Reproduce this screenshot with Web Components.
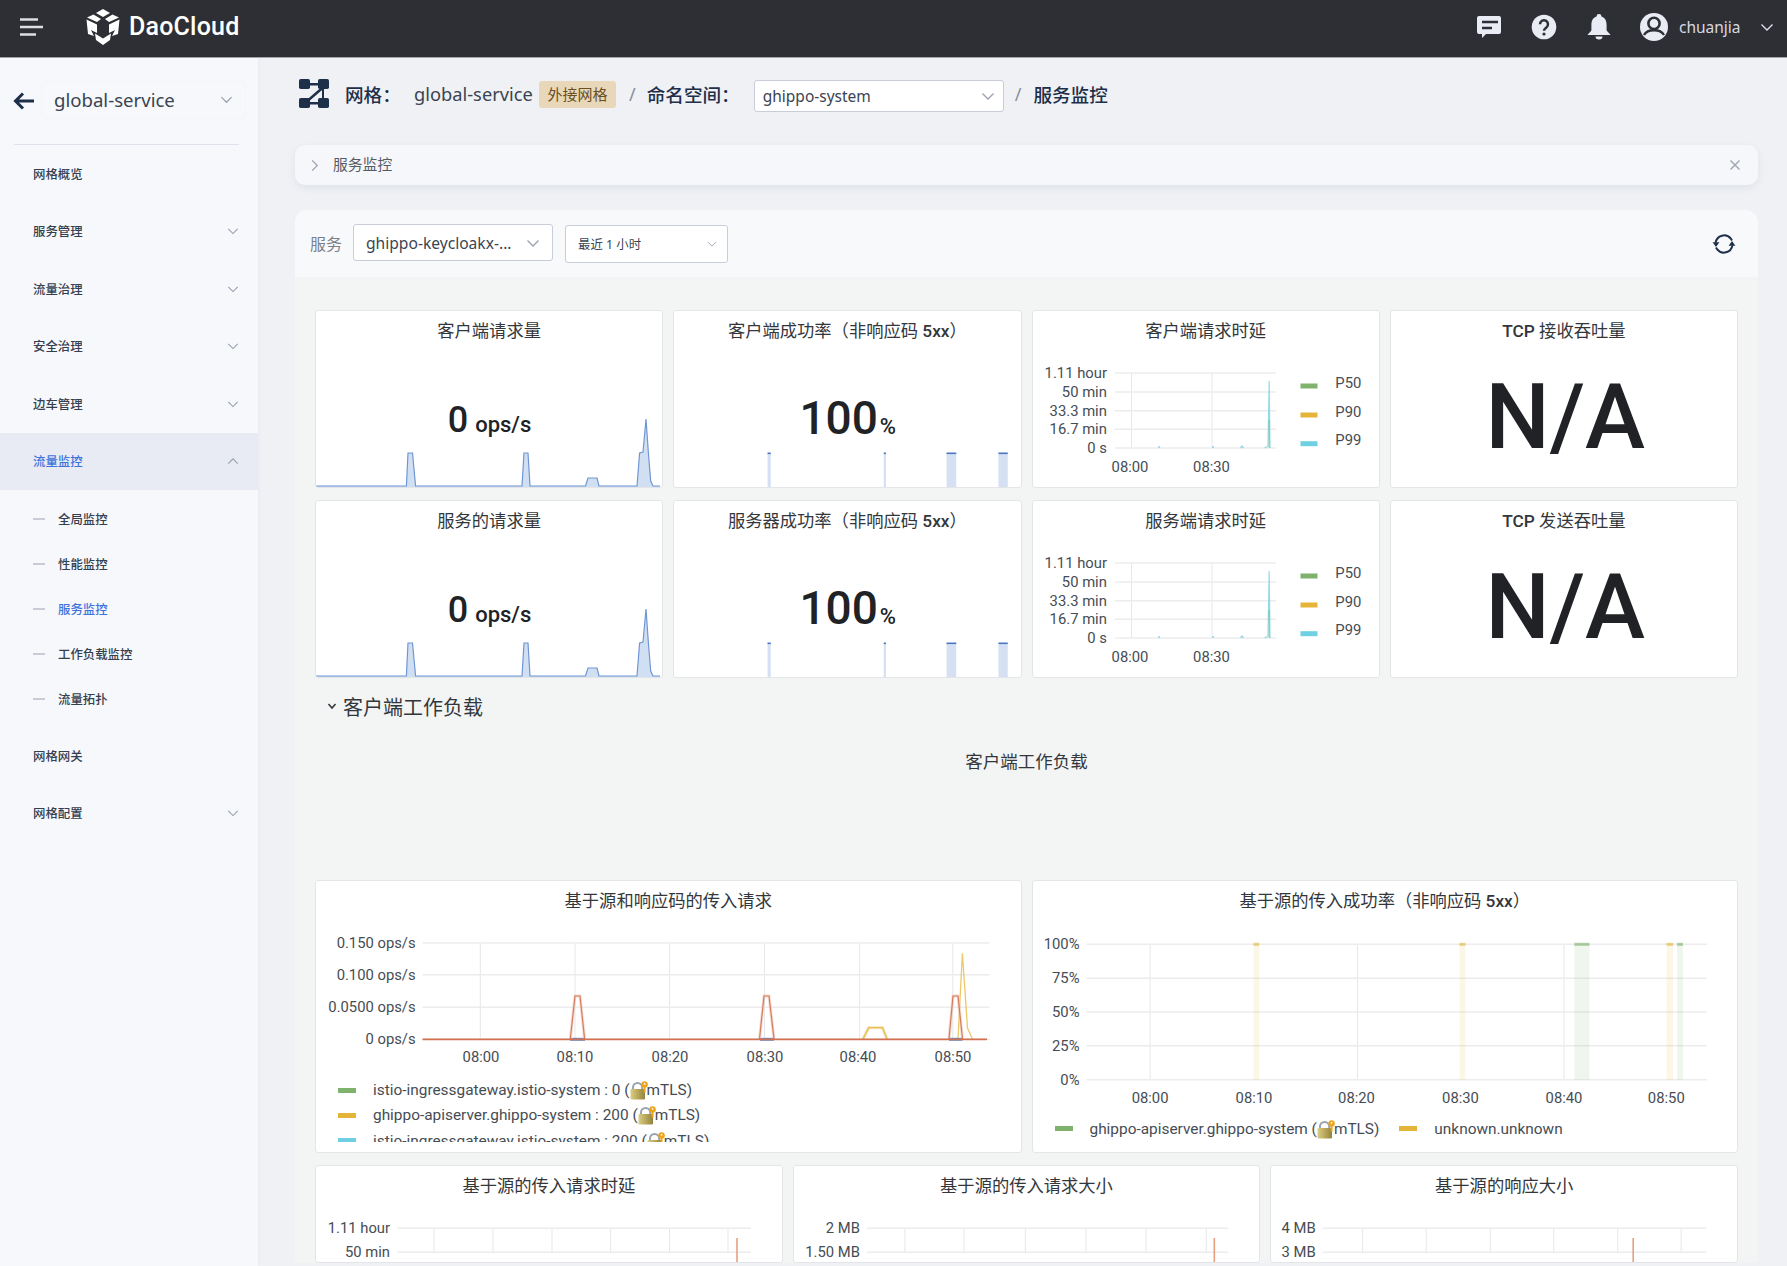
<!DOCTYPE html>
<html lang="zh">
<head>
<meta charset="utf-8">
<title>服务监控</title>
<style>
  html, body { margin: 0; height: 100%; overflow: hidden; background: #eff1f5; }
  body { font-family: "Noto Sans", "Noto Sans CJK SC", sans-serif; }
</style>
</head>
<body>
<dao-app>
  <top-bar slot="top"></top-bar>
  <side-nav slot="side"></side-nav>
  <mesh-crumbs></mesh-crumbs>
  <tab-strip label="服务监控"></tab-strip>
  <filter-bar></filter-bar>
  <mesh-dashboard></mesh-dashboard>
</dao-app>

<script>
const chevron = (size = 14, color = "#9aa0ae", up = false) => `<svg width="${size}" height="${size}" viewBox="0 0 14 14" fill="none" style="display:block">
<path d="${up ? "M1.5 10L7 4.5L12.5 10" : "M1.5 4.5L7 10L12.5 4.5"}" stroke="${color}" stroke-width="1.3"/></svg>`;

const GREEN = "#7eb26d", YELLOW = "#e5b53a", CYAN = "#6ed0e0", RED = "#d2714f";

const lockIcon = `<svg class="lock" width="18" height="19" viewBox="0 0 18 19">
<defs><linearGradient id="lk" x1="0" x2="1"><stop offset="0" stop-color="#dccd82"/><stop offset="1" stop-color="#94833a"/></linearGradient></defs>
<path d="M3 9V6.5a4.6 4.6 0 0 1 9.2 0V9" fill="none" stroke="#9aa4ad" stroke-width="2"/>
<rect x=".5" y="8" width="14.5" height="10.5" rx="1.2" fill="url(#lk)"/>
<circle cx="14.6" cy="3.4" r="3.2" fill="#eda51f"/><circle cx="14.6" cy="2.8" r=".9" fill="#fff"/>
<path d="M13.6 6h2v5.5h-2z" fill="#eda51f"/></svg>`;

// draws gridlines and labels in page coordinates, the viewBox does the shifting
function gridChart({ box, x1, x2, labelX, rows, cols, xLabels, xLabelY, body = "", font = 14.8 }) {
  const [bx, by, bw, bh] = box;
  const top = rows[0][0], bottom = rows[rows.length - 1][0];
  let s = `<svg xmlns="http://www.w3.org/2000/svg" width="${bw}" height="${bh}" viewBox="${bx} ${by} ${bw} ${bh}" font-family="Roboto, 'Noto Sans CJK SC', sans-serif" font-size="${font}" fill="#464c54" style="display:block;grid-area:1/1">`;
  for (const c of cols) s += `<line x1="${c}" x2="${c}" y1="${top}" y2="${bottom}" stroke="#e6e7e9"/>`;
  for (const [y] of rows) s += `<line x1="${x1}" x2="${x2}" y1="${y}" y2="${y}" stroke="#ececee" stroke-width="1.6"/>`;
  for (const [y, t] of rows) s += `<text x="${labelX}" y="${y + 5}" text-anchor="end">${t}</text>`;
  for (const [x, t] of xLabels || []) s += `<text x="${x}" y="${xLabelY}" text-anchor="middle">${t}</text>`;
  return s + body + `</svg>`;
}

function bareSvg(box, body) {
  const [bx, by, bw, bh] = box;
  return `<svg xmlns="http://www.w3.org/2000/svg" width="${bw}" height="${bh}" viewBox="${bx} ${by} ${bw} ${bh}" font-family="Roboto, sans-serif" fill="#202226" style="display:block;grid-area:1/1">${body}</svg>`;
}

const poly = (pts, color, width = 1.4, op = 1) => `<polyline points="${pts}" fill="none" stroke="${color}" stroke-width="${width}" opacity="${op}"/>`;
const band = (a, b, top, bottom, color, op = .12) => `<rect x="${a}" y="${top}" width="${b - a}" height="${bottom - top}" fill="${color}" opacity="${op}"/><rect x="${a}" y="${top - 1.5}" width="${b - a}" height="3" fill="${color}" opacity=".6"/>`;

const REQ_BOX = [316, 311, 346.25, 176];
const requestSpark = () => {
  const pts = "316,486 406.4,486 408,453 412.5,453 415.6,486 522,486 524,453 528,453 530,486 585.5,486 588,478 597,478 599,486 637,486 639.6,453 643,452 646,419 648.4,453 650.7,481 653,486 660,486";
  return `<polygon points="${pts} 660,488 316,488" fill="#c9d9f0" opacity=".85"/>` + poly(pts, "#6f96d4", 1.2);
};
const reqStat = bareSvg(REQ_BOX, requestSpark() + `<text x="489.5" y="431.7" text-anchor="middle" font-size="36" font-weight="500">0<tspan dx="7" font-size="22">ops/s</tspan></text>`);

const RATE_BOX = [674.25, 311, 346.25, 176];
const rateBars = [[767.8, 771], [884, 886.2], [946.8, 956.5], [998.7, 1008]].map(([a, b]) =>
  `<rect x="${a}" y="453" width="${b - a}" height="35" fill="#d5e1f3"/><rect x="${a}" y="452.5" width="${b - a}" height="1.6" fill="#4a76c4"/>`).join("");
const rateStat = bareSvg(RATE_BOX, rateBars + `<text x="848" y="434" text-anchor="middle" font-size="46" font-weight="500">100<tspan font-size="22" dx="2">%</tspan></text>`);

const latencyChart = gridChart({
  box: [1032.5, 311, 346.25, 176], x1: 1114.4, x2: 1275.3, labelX: 1106.4,
  rows: [[373, "1.11 hour"], [392, "50 min"], [410.7, "33.3 min"], [429.3, "16.7 min"], [448, "0 s"]],
  cols: [1131, 1211.6],
  xLabels: [[1129.5, "08:00"], [1211, "08:30"]], xLabelY: 472,
  body: poly("1158,448 1158.5,446 1159.5,448", CYAN, 1, .7) + poly("1212,448 1212.5,446 1213,448", CYAN, 1, .7) + poly("1240,448 1241.5,446 1243,448", CYAN, 1.4, .7)
    + poly("1264,448 1266,447 1267.5,446 1268.7,381 1269.5,448", CYAN, 1.2, .75) + poly("1268.7,448 1268.7,420", GREEN, 1.2, .6)
    + [[386, GREEN, "P50", 387.7], [415, YELLOW, "P90", 417], [443.7, CYAN, "P99", 445]].map(([y, c, t, ty]) =>
      `<rect x="1300" y="${y - 2.5}" width="17" height="5" fill="${c}"/><text x="1334.8" y="${ty}" fill="#464c54">${t}</text>`).join("")
});

const naStat = bareSvg([1390.75, 311, 346.25, 176], `<text x="1565" y="448.3" text-anchor="middle" font-size="90.5" font-weight="500">N/A</text>`);

const chartOne = gridChart({
  box: [316, 881, 704.5, 271], x1: 422.5, x2: 989.5, labelX: 415.6,
  rows: [[943, "0.150 ops/s"], [974.7, "0.100 ops/s"], [1007.3, "0.0500 ops/s"], [1039.3, "0 ops/s"]],
  cols: [480.3, 575, 669.5, 764.5, 859.6, 952.8],
  xLabels: [[481, "08:00"], [575, "08:10"], [670, "08:20"], [765, "08:30"], [858, "08:40"], [953, "08:50"]], xLabelY: 1062,
  body: poly("863,1039 868.7,1027.7 882.5,1027.7 887,1039", "#f0d9a0", 3, .7) + poly("863,1039 868.7,1027.7 882.5,1027.7 887,1039", YELLOW, 1.3, .8)
    + poly("958,1039 962.4,953.3 967.5,1028 972.5,1039", YELLOW, 1.3, .75)
    + poly("570,1039.3 585,1039.3", "#5f8fd6", 3) + poly("760,1039.3 774,1039.3", "#5f8fd6", 3) + poly("949,1039.3 962.5,1039.3", "#5f8fd6", 3)
    + [["570.3,1039 575,996 580,996 584.6,1039"], ["759.5,1039 764,996 769,996 774,1039"], ["949,1039 953,996 958,996 962.5,1039"]].map(([p]) => poly(p, "#f0c7b6", 3, .6) + poly(p, RED, 1.2, .9)).join("")
    + poly("422.5,1039.3 987,1039.3", RED, 1.8)
});

const chartTwo = gridChart({
  box: [1032.5, 881, 704.5, 271], x1: 1086, x2: 1706.4, labelX: 1079,
  rows: [[944.3, "100%"], [978.3, "75%"], [1012, "50%"], [1045.7, "25%"], [1079.7, "0%"]],
  cols: [1149.6, 1357, 1563.5],
  xLabels: [[1149.6, "08:00"], [1253.5, "08:10"], [1356, "08:20"], [1460, "08:30"], [1563.5, "08:40"], [1665.8, "08:50"]], xLabelY: 1103,
  body: band(1253, 1258.7, 944.3, 1079.7, YELLOW) + band(1459, 1465, 944.3, 1079.7, YELLOW) + band(1573.8, 1589, 944.3, 1079.7, GREEN)
    + band(1666, 1672.6, 944.3, 1079.7, YELLOW) + band(1676.5, 1682.4, 944.3, 1079.7, GREEN)
});

const spike = (x) => poly(`${x},1265 ${x},1238`, "#e8a07c", 1.6);
const cutA = gridChart({
  box: [316, 1166, 465.67, 97], x1: 397, x2: 751, labelX: 390,
  rows: [[1228.3, "1.11 hour"], [1252.3, "50 min"]], cols: [434, 493, 552, 610.7, 669.5, 728],
  body: spike(737)
});
const cutB = gridChart({
  box: [793.67, 1166, 465.67, 97], x1: 867, x2: 1228, labelX: 859.6,
  rows: [[1228.3, "2 MB"], [1252.3, "1.50 MB"]], cols: [904.6, 963.8, 1025, 1085.6, 1145.7, 1206],
  body: spike(1214)
});
const cutC = gridChart({
  box: [1271.3, 1166, 465.7, 97], x1: 1323, x2: 1706.4, labelX: 1316,
  rows: [[1228.3, "4 MB"], [1252.3, "3 MB"]], cols: [1363, 1426.5, 1490.6, 1554, 1618, 1681.5],
  body: spike(1633.5)
});

class DaoApp extends HTMLElement {
  constructor() {
    super();
    this.attachShadow({ mode: "open" }).innerHTML = `<style>
      :host { display: grid; grid-template-rows: 58px 1fr; grid-template-columns: 258px 1fr; height: 1266px; overflow: hidden; }
      ::slotted([slot=top]) { grid-column: 1 / 3; }
      main { padding: 22px 29px 0 37px; min-width: 0; height: 1186px; overflow: hidden; }
    </style><slot name="top"></slot><slot name="side"></slot><main><slot></slot></main>`;
  }
}

class TopBar extends HTMLElement {
  constructor() {
    super();
    const ic = "#e9ecf4", dk = "#2e2f35";
    this.attachShadow({ mode: "open" }).innerHTML = `<style>
      :host { display: flex; align-items: center; height: 58px; padding-bottom: 4px; box-sizing: border-box; background: #2e2f35; border-bottom: 1px solid #a5a6aa; color: #fff; }
      .menu { margin-left: 19px; display: block; }
      .logo { margin-left: 41px; display: block; }
      .brand { margin-left: 9px; font: 500 25px Roboto, sans-serif; letter-spacing: .2px; }
      .right { margin-left: auto; display: flex; align-items: center; }
      .right svg { display: block; }
      .name { color: #d6d9e0; font-size: 15.5px; margin-left: 11px; width: 81px; }
    </style>
    <svg class="menu" width="26" height="20" viewBox="0 0 26 20" fill="none" stroke="#dcdee3" stroke-width="2.4">
      <path d="M1 2.5H19M1 10H24M1 17.5H17"/></svg>
    <svg class="logo" width="34" height="36" viewBox="0 0 34 36" fill="#fff">
      <path d="M17 0L24 4L17 8L10 4Z"/><path d="M7.5 5.5L15 10L11 13L1 8.5Z"/><path d="M26.5 5.5L33 8.5L23 13L19 10Z"/>
      <path d="M0.5 10.5L11 15.5V24L5 21L8 27L2 25Z"/><path d="M33.5 10.5L23 15.5V24L29 21L26 27L32 25Z"/>
      <path d="M9 24.5L17 29.5L25 24.5L24 31L17 36L10 31Z"/></svg>
    <span class="brand">DaoCloud</span>
    <div class="right">
      <svg width="26" height="24" viewBox="0 0 26 24" style="margin-right:29px">
        <path d="M3 1H23a2 2 0 0 1 2 2V17a2 2 0 0 1-2 2H10L6 23V19H3a2 2 0 0 1-2-2V3a2 2 0 0 1 2-2Z" fill="${ic}"/>
        <path d="M6 7H22M6 13H16" stroke="${dk}" stroke-width="2.4"/></svg>
      <svg width="26" height="26" viewBox="0 0 26 26" style="margin-right:30px">
        <circle cx="13" cy="13" r="12.3" fill="${ic}"/>
        <path d="M9 10.2a4 4 0 1 1 6.4 3.2C13.9 14.5 13 15 13 16.8" fill="none" stroke="${dk}" stroke-width="2.5"/><circle cx="13" cy="20" r="1.6" fill="${dk}"/></svg>
      <svg width="24" height="26" viewBox="0 0 24 26" style="margin-right:29px">
        <path d="M12 0a2.4 2.4 0 0 1 2.4 2.6C18 3.6 19.6 7 19.6 11V16.5L23.6 21H.4L4.4 16.5V11C4.4 7 6 3.6 9.6 2.6A2.4 2.4 0 0 1 12 0Z" fill="${ic}"/>
        <path d="M8.5 22.5H15.5A3.5 3 0 0 1 8.5 22.5Z" fill="${ic}"/></svg>
      <svg width="28" height="28" viewBox="-14 -14 28 28">
        <circle r="14" fill="${ic}"/><circle cy="-3.6" r="5.6" fill="${ic}" stroke="${dk}" stroke-width="2.6"/>
        <path d="M-10 8C-7 3-3 3.2 0 3.2S7 3 10 8" fill="none" stroke="${dk}" stroke-width="2.4"/></svg>
      <span class="name">chuanjia</span>
      <span style="margin-right:13px">${chevron(14, "#e2e4ea")}</span>
    </div>`;
  }
}

class NavItem extends HTMLElement {
  connectedCallback() {
    const active = this.hasAttribute("active");
    const open = this.hasAttribute("open");
    this.shadowRoot || this.attachShadow({ mode: "open" });
    this.shadowRoot.innerHTML = `<style>
      :host { display: block; }
      .row { display: flex; align-items: center; justify-content: space-between; height: 57.5px; padding: 0 19px 0 33px; box-sizing: border-box;
             font-size: 12.4px; font-weight: 500; color: ${active ? "#3f73dc" : "#35404f"}; background: ${active ? "#e8ebf3" : "none"}; }
      .subs { display: ${open ? "block" : "none"}; padding: 6px 0; }
    </style><div class="row"><span>${this.getAttribute("label")}</span>${this.hasAttribute("more") ? chevron(12, "#9aa0ae", open) : ""}</div><div class="subs"><slot></slot></div>`;
  }
}

class NavSub extends HTMLElement {
  connectedCallback() {
    this.shadowRoot || this.attachShadow({ mode: "open" });
    this.shadowRoot.innerHTML = `<style>
      :host { display: flex; align-items: center; height: 45px; padding-left: 33px; font-size: 12.4px; font-weight: 500; color: ${this.hasAttribute("active") ? "#3f73dc" : "#35404f"}; }
      i { width: 12px; height: 2px; background: #c9ccd6; margin-right: 13px; }
    </style><i></i><span>${this.getAttribute("label")}</span>`;
  }
}

class SideNav extends HTMLElement {
  constructor() {
    super();
    this.attachShadow({ mode: "open" }).innerHTML = `<style>
      :host { display: block; background: #f6f8fc; box-shadow: 1px 0 3px rgba(40,50,70,.03); height: 1208px; position: relative; }
      .head { display: flex; align-items: center; height: 86px; padding-left: 13px; box-sizing: border-box; }
      .sel { display: flex; align-items: center; justify-content: space-between; margin-left: 7px; width: 205px; height: 38px; padding: 0 12px; box-sizing: border-box; margin-top: -3px;
             border: 1px solid #f3f5f9; border-radius: 4px; font-size: 18.6px; color: #3a4452; }
      hr { border: 0; border-top: 1px solid #dfe2ea; margin: 0 19px 0 14px; }
    </style>
    <div class="head">
      <svg width="21" height="18" viewBox="0 0 21 18" fill="none" stroke="#1e2f49" stroke-width="3"><path d="M21 9H3M10 1.5L2.5 9L10 16.5"/></svg>
      <div class="sel"><span>global-service</span>${chevron(13)}</div>
    </div>
    <hr>
    <nav>
      <nav-item label="网格概览"></nav-item>
      <nav-item label="服务管理" more></nav-item>
      <nav-item label="流量治理" more></nav-item>
      <nav-item label="安全治理" more></nav-item>
      <nav-item label="边车管理" more></nav-item>
      <nav-item label="流量监控" more open active>
        <nav-sub label="全局监控"></nav-sub>
        <nav-sub label="性能监控"></nav-sub>
        <nav-sub label="服务监控" active></nav-sub>
        <nav-sub label="工作负载监控"></nav-sub>
        <nav-sub label="流量拓扑"></nav-sub>
      </nav-item>
      <nav-item label="网格网关"></nav-item>
      <nav-item label="网格配置" more></nav-item>
    </nav>`;
  }
}

class SelectBox extends HTMLElement {
  connectedCallback() {
    this.shadowRoot || this.attachShadow({ mode: "open" });
    this.shadowRoot.innerHTML = `<style>
      :host { display: flex; align-items: center; justify-content: space-between; box-sizing: border-box; background: #fff; border: 1px solid #c9ccd9; border-radius: 3px; }
    </style><span><slot></slot></span>${chevron(+this.getAttribute("chev") || 14)}`;
  }
}

class MeshCrumbs extends HTMLElement {
  constructor() {
    super();
    this.attachShadow({ mode: "open" }).innerHTML = `<style>
      :host { display: flex; align-items: center; height: 32px; margin-bottom: 33px; margin-left: 4px; color: #1e2f49; font-size: 18.6px; white-space: nowrap; }
      b { font-weight: 500; margin-top: -5px; }
      .thin { color: #3a4452; font-weight: 400; font-size: 18.3px; margin-top: -5px; width: 125px; }
      .tag { background: #e8d8b9; color: #6b4f1f; font-size: 15px; border-radius: 3px; height: 27px; line-height: 27px; width: 77px; text-align: center; margin-top: -3px; }
      .sep { color: #8a8f9a; margin: -5px 11px 0 13px; font-size: 18px; }
      .sep.two { margin-left: 11px; margin-right: 12px; }
      select-box { width: 250px; height: 32px; padding: 0 8px; font-size: 15.5px; color: #3a4452; }
    </style>
    <svg width="30" height="30" viewBox="0 0 30 30" style="margin-top:-4px;display:block" fill="#1e2f49">
      <rect x="0" y="0" width="11" height="10" rx="1.8"/><rect x="19" y="0" width="11" height="10" rx="1.8"/>
      <rect x="0" y="19" width="11" height="10" rx="1.8"/><rect x="19" y="19" width="11" height="10" rx="1.8"/>
      <path d="M8 4H22V6.4H8ZM8 23H22V25.4H8ZM22.6 8L24.8 9.4 8 24 5.8 22.4ZM23 8H25V21H23Z"/></svg>
    <b style="margin-left:16px;width:69px">网格：</b>
    <span class="thin">global-service</span>
    <span class="tag">外接网格</span>
    <span class="sep">/</span>
    <b style="width:107px">命名空间：</b>
    <select-box>ghippo-system</select-box>
    <span class="sep two">/</span>
    <b>服务监控</b>`;
  }
}

class TabStrip extends HTMLElement {
  connectedCallback() {
    this.shadowRoot || this.attachShadow({ mode: "open" });
    this.shadowRoot.innerHTML = `<style>
      :host { display: flex; align-items: center; height: 40px; background: #f6f7fa; border-radius: 10px; box-shadow: 0 3px 8px rgba(50,60,80,.08); padding: 0 17px 0 13px; margin-bottom: 25px; color: #555b66; font-size: 14.8px; }
      span { margin-left: 12px; flex: 1; margin-top: -3px; }
    </style>${chevron(13, "#9aa0ae").replace("<path", '<path transform="rotate(-90 7 7)"')}
    <span>${this.getAttribute("label")}</span>
    <svg width="12" height="12" viewBox="0 0 12 12" stroke="#a5a9b4" stroke-width="1.5"><path d="M1.5 1.5L10.5 10.5M10.5 1.5L1.5 10.5"/></svg>`;
  }
}

class FilterBar extends HTMLElement {
  constructor() {
    super();
    this.attachShadow({ mode: "open" }).innerHTML = `<style>
      :host { display: flex; align-items: center; height: 67px; background: #f8f9fb; border-radius: 12px 12px 0 0; padding: 0 22px 0 15px; color: #7a7f89; font-size: 16px; }
      .a { margin-left: 11px; width: 200px; height: 37px; padding: 0 12px; font-size: 15.6px; color: #3a4452; margin-top: -2px; }
      .b { margin-left: 12px; width: 163px; height: 38px; padding: 0 10px 0 12px; font-size: 12.4px; color: #3a4452; }
      svg { margin-left: auto; display: block; }
    </style>
    <span style="margin-top:-2px">服务</span>
    <select-box class="a">ghippo-keycloakx-...</select-box>
    <select-box class="b" chev="10">最近 1 小时</select-box>
    <svg width="24" height="24" viewBox="0 0 24 24" fill="none" stroke="#1e2f49" stroke-width="2">
      <path d="M3.6 10.6A8.6 8.6 0 0 1 18.8 6.6L20 8.6M20.4 13.4A8.6 8.6 0 0 1 5.2 17.4L4 15.4"/>
      <path d="M.6 10.2H7.4L4 15ZM23.4 13.8H16.6L20 9Z" fill="#1e2f49" stroke="none"/></svg>`;
  }
}

class PanelCard extends HTMLElement {
  connectedCallback() {
    this.shadowRoot || this.attachShadow({ mode: "open" });
    this.shadowRoot.innerHTML = `<style>
      :host { display: grid; background: #fff; border: 1px solid #e3e5e8; border-radius: 3px; overflow: hidden; box-sizing: border-box; min-width: 0; align-content: start; }
      h3 { grid-area: 1/1; z-index: 1; margin: 0; height: 40px; text-align: center; font: 400 17.3px/41px Roboto, "Noto Sans CJK SC", sans-serif; color: #33373c; white-space: pre; }
      .b { font-weight: 500; }
      .stack { grid-area: 1/1; display: grid; }
    </style><h3>${this.getAttribute("heading").replace(/(TCP|5xx)/, '<span class="b">$1</span>')}</h3><div class="stack"><slot></slot></div>`;
  }
}

class ChartLegend extends HTMLElement {
  connectedCallback() {
    this.shadowRoot || this.attachShadow({ mode: "open" });
    const items = JSON.parse(this.getAttribute("items"));
    const row = this.hasAttribute("row");
    this.shadowRoot.innerHTML = `<style>
      :host { grid-area: 1/1; align-self: end; display: flex; flex-direction: ${row ? "row" : "column"}; height: ${row ? 38 : 75}px; overflow: hidden; padding: ${row ? "0 0 0 22px" : "10.5px 0 0 22px"}; margin-bottom: ${row ? 4 : 10}px; box-sizing: border-box;
              font: 15.4px Roboto, sans-serif; color: #464c54; ${row ? "gap: 20px; align-items: center;" : ""} }
      div { display: flex; align-items: center; height: 25.3px; flex: none; white-space: pre; }
      i { width: 18px; height: 5px; margin-right: 17px; flex: none; }
      span { line-height: 20px; }
      .lock { vertical-align: -3px; margin: -4px -1px -2px 0; }
    </style>${items.map(([c, t]) => `<div><i style="background:${c}"></i><span>${t.replace("#", lockIcon)}</span></div>`).join("")}`;
  }
}

class MeshDashboard extends HTMLElement {
  constructor() {
    super();
    const stat = (heading, inner) => `<panel-card heading="${heading}">${inner}</panel-card>`;
    this.attachShadow({ mode: "open" }).innerHTML = `<style>
      :host { display: block; height: 986px; overflow: hidden; background: #f3f5f5; padding: 33px 20px 0; box-sizing: border-box; font-family: Roboto, "Noto Sans CJK SC", sans-serif; }
      .four { display: grid; grid-template-columns: repeat(4, 1fr); grid-auto-rows: 178px; gap: 12px 10px; }
      .sec { display: flex; align-items: center; height: 30px; margin-top: 13px; padding-left: 12px; font-size: 20px; color: #33373c; }
      .sec svg { margin-right: 6px; }
      h2 { margin: 21px 0 98px; height: 40px; font: 400 17.5px/40px Roboto, "Noto Sans CJK SC", sans-serif; text-align: center; color: #33373c; }
      .two { display: grid; grid-template-columns: repeat(2, 1fr); grid-auto-rows: 273px; gap: 10px; }
      .three { display: grid; grid-template-columns: repeat(3, 1fr); grid-auto-rows: 98px; gap: 10px; margin-top: 12px; }
    </style>
    <div class="four">
      ${stat("客户端请求量", reqStat)}
      ${stat("客户端成功率（非响应码 5xx）", rateStat)}
      ${stat("客户端请求时延", latencyChart)}
      ${stat("TCP 接收吞吐量", naStat)}
      ${stat("服务的请求量", reqStat)}
      ${stat("服务器成功率（非响应码 5xx）", rateStat)}
      ${stat("服务端请求时延", latencyChart)}
      ${stat("TCP 发送吞吐量", naStat)}
    </div>
    <div class="sec"><svg width="10" height="10" viewBox="0 0 10 10" fill="none" stroke="#33373c" stroke-width="1.6"><path d="M1.5 3L5 7L8.5 3"/></svg>客户端工作负载</div>
    <h2>客户端工作负载</h2>
    <div class="two">
      <panel-card heading="基于源和响应码的传入请求">${chartOne}
        <chart-legend items='${JSON.stringify([[GREEN, "istio-ingressgateway.istio-system : 0 (#mTLS)"], [YELLOW, "ghippo-apiserver.ghippo-system : 200 (#mTLS)"], [CYAN, "istio-ingressgateway.istio-system : 200 (#mTLS)"]])}'></chart-legend></panel-card>
      <panel-card heading="基于源的传入成功率（非响应码 5xx）">${chartTwo}
        <chart-legend row items='${JSON.stringify([[GREEN, "ghippo-apiserver.ghippo-system (#mTLS)"], [YELLOW, "unknown.unknown"]])}'></chart-legend></panel-card>
    </div>
    <div class="three">
      <panel-card heading="基于源的传入请求时延">${cutA}</panel-card>
      <panel-card heading="基于源的传入请求大小">${cutB}</panel-card>
      <panel-card heading="基于源的响应大小">${cutC}</panel-card>
    </div>`;
  }
}

customElements.define("nav-item", NavItem);
customElements.define("nav-sub", NavSub);
customElements.define("select-box", SelectBox);
customElements.define("chart-legend", ChartLegend);
customElements.define("panel-card", PanelCard);
customElements.define("top-bar", TopBar);
customElements.define("side-nav", SideNav);
customElements.define("mesh-crumbs", MeshCrumbs);
customElements.define("tab-strip", TabStrip);
customElements.define("filter-bar", FilterBar);
customElements.define("mesh-dashboard", MeshDashboard);
customElements.define("dao-app", DaoApp);
</script>
</body>
</html>
